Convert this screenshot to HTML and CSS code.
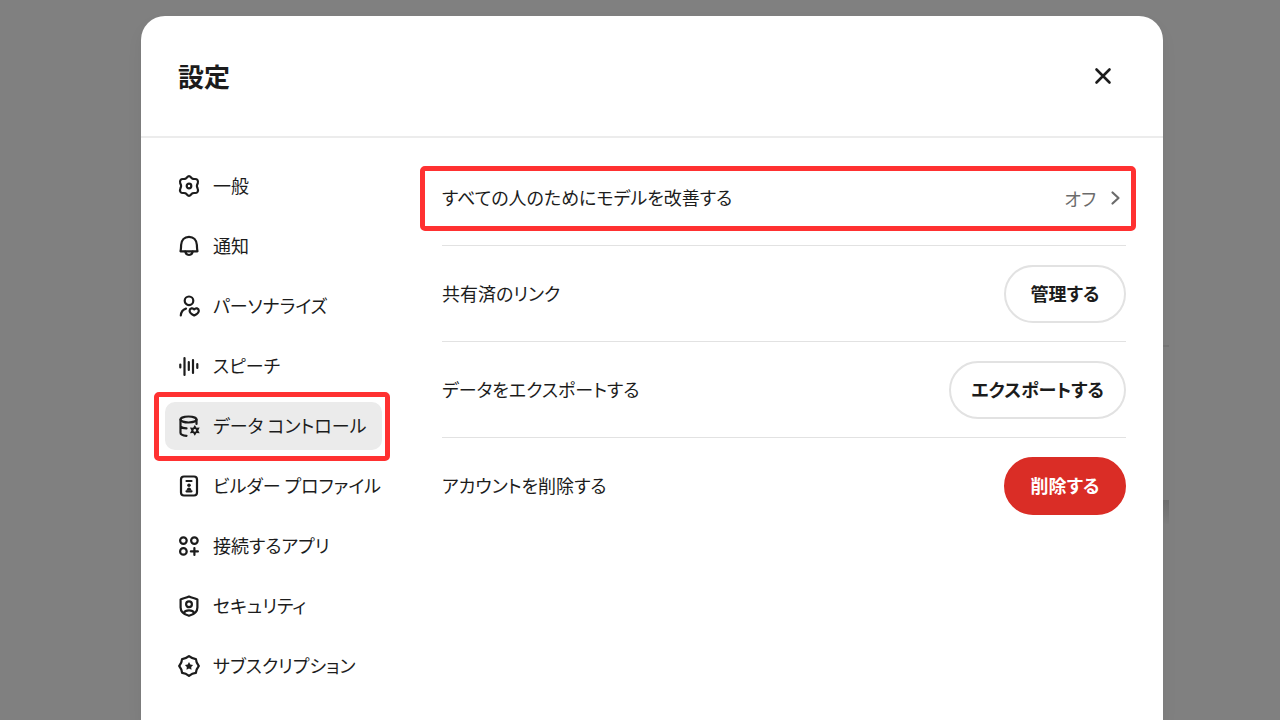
FILE: index.html
```html
<!DOCTYPE html>
<html lang="ja">
<head>
  <meta charset="UTF-8">
  <meta name="viewport" content="width=device-width, initial-scale=1.0">
  <title>設定</title>
  <link rel="stylesheet" href="styles.css">
</head>
<body>
  <main class="modal">
    <header class="modal-header">
      <h1>設定</h1>
      <button class="close" type="button" aria-label="閉じる">
        <svg class="icon" viewBox="0 0 20 20"><path d="M3.500 3.500l13 13M16.500 3.500l-13 13"/></svg>
      </button>
    </header>

    <div class="modal-body">
      <nav class="menu">
        <a class="menu-item" href="#">
          <svg class="icon" viewBox="0 0 22 22"><path d="M11 1.200c1.600 0 2.200 2 3.600 2.600s3.600-.4 4.600.8c1 1.300 1 2.600.6 3.600-.3.900-.9 1.700-.9 2.800s.6 1.900.9 2.800c.4 1 .4 2.300-.6 3.600-1 1.200-3.200.2-4.600.8s-2 2.600-3.600 2.600-2.200-2-3.600-2.600-3.600.4-4.600-.8c-1-1.300-1-2.600-.6-3.600.3-.9.9-1.700.9-2.800s-.6-1.900-.9-2.800c-.4-1-.4-2.300.6-3.600 1-1.200 3.200-.2 4.600-.8S9.400 1.200 11 1.200z"/><circle cx="11" cy="11" r="2.300"/></svg>
          <span>一般</span>
        </a>
        <a class="menu-item" href="#">
          <svg class="icon" viewBox="0 0 22 22"><path d="M2.500 16.300c.6-2.200.5-3.800.6-6.300C3.400 5 6.500 1.800 11 1.800S18.600 5 18.900 10c.1 2.500 0 4.100.6 6.300z"/><path d="M7.300 16.500c.5 2.200 1.800 3.500 3.700 3.500s3.200-1.300 3.700-3.500"/></svg>
          <span>通知</span>
        </a>
        <a class="menu-item" href="#">
          <svg class="icon" viewBox="0 0 22 22"><circle cx="11" cy="5.800" r="4.300"/><path d="M2.800 20.500c.3-3.600 2-5.900 5.200-6.900"/><path d="M16.200 20.500c-2.700-1.300-4.600-2.700-4.600-4.800 0-2.500 3.200-3.200 4.600-1.300 1.400-1.900 4.600-1.200 4.600 1.300 0 2.100-1.900 3.500-4.600 4.800z"/></svg>
          <span>パーソナライズ</span>
        </a>
        <a class="menu-item" href="#">
          <svg class="icon" viewBox="0 0 22 22"><path d="M2.300 9.500v3M6.500 3v17M10.800 7v8M15 5v13M19.300 9v4"/></svg>
          <span>スピーチ</span>
        </a>
        <a class="menu-item active" href="#" aria-current="page">
          <svg class="icon" viewBox="0 0 22 22"><ellipse cx="10.500" cy="4.500" rx="8" ry="3"/><path d="M2.500 4.500v13.300c0 1.700 2.600 2.800 6 3M18.500 4.500v4.500M2.500 11.500c1 1.200 3 1.800 6 1.900"/><path class="fill" d="M16.800 10l1.700 2.700 3.200-.1-1.500 2.800 1.500 2.800-3.200-.1-1.700 2.700-1.700-2.700-3.200.1 1.500-2.800-1.500-2.800 3.200.1z"/><circle class="hole" cx="16.800" cy="15.400" r="1.300"/></svg>
          <span>データ コントロール</span>
        </a>
        <a class="menu-item" href="#">
          <svg class="icon" viewBox="0 0 22 22"><rect x="3" y="1.500" width="16" height="19" rx="3"/><path d="M8.500 6h5M8.500 16.300h5"/><circle class="fill" cx="11" cy="10.300" r="1.800"/><path class="fill" d="M8.500 15.600c.3-2 1.200-3 2.500-3s2.200 1 2.500 3z"/></svg>
          <span>ビルダー プロファイル</span>
        </a>
        <a class="menu-item" href="#">
          <svg class="icon" viewBox="0 0 22 22"><circle cx="5.400" cy="5.600" r="3.300"/><circle cx="16.400" cy="5.600" r="3.300"/><circle cx="5.400" cy="16.400" r="3.300"/><path d="M16.400 13v7M12.900 16.400h7"/></svg>
          <span>接続するアプリ</span>
        </a>
        <a class="menu-item" href="#">
          <svg class="icon" viewBox="0 0 22 22"><path d="M11 1.500c2.800 1.600 5.400 1.400 8.400 2.900v8c0 4.800-3.900 7.100-8.400 8.400-4.500-1.300-8.400-3.600-8.400-8.400v-8c3-1.500 5.600-1.300 8.400-2.900z"/><circle cx="11" cy="9.300" r="2.900"/><path d="M5.700 18c1-2 3-2.700 5.300-2.700s4.300.7 5.300 2.700"/></svg>
          <span>セキュリティ</span>
        </a>
        <a class="menu-item" href="#">
          <svg class="icon" viewBox="0 0 22 22"><path d="M11 1.200q3.200 2.600 6.900 2.900 .3 3.700 2.900 6.900-2.600 3.200-2.900 6.900-3.700.3-6.900 2.900-3.200-2.600-6.900-2.900-.3-3.700-2.900-6.900 2.600-3.200 2.900-6.900 3.700-.3 6.900-2.900z"/><path class="fill" d="M11 7l1.300 2.400 2.800.5-1.900 2 .3 2.800-2.500-1.200-2.500 1.200.3-2.800-1.900-2 2.800-.5z"/></svg>
          <span>サブスクリプション</span>
        </a>
      </nav>

      <section class="settings">
        <div class="row marked">
          <span>すべての人のためにモデルを改善する</span>
          <button class="value" type="button">
            オフ
            <svg class="icon" viewBox="0 0 12 22"><path d="M2.500 5.500L8.500 11l-6 5.500"/></svg>
          </button>
        </div>
        <div class="row">
          <span>共有済のリンク</span>
          <button class="btn" type="button">管理する</button>
        </div>
        <div class="row">
          <span>データをエクスポートする</span>
          <button class="btn" type="button">エクスポートする</button>
        </div>
        <div class="row">
          <span>アカウントを削除する</span>
          <button class="btn danger" type="button">削除する</button>
        </div>
      </section>
    </div>
  </main>
</body>
</html>
```

FILE: styles.css
```css
* {
  box-sizing: border-box;
}
body {
  margin: 0;
  min-height: 100vh;
  display: flex;
  padding: 16px 117px 0 141px;
  background-color: #808080;
  color: #1c1c1c;
  font-family: "Noto Sans CJK JP", sans-serif;
  font-size: 18px;
  line-height: 30px;
  font-feature-settings: "palt";
}
button {
  font: inherit;
  font-feature-settings: inherit;
  color: inherit;
  background: none;
  border: none;
  padding: 0;
  cursor: pointer;
}
.icon {
  width: 22px;
  height: 22px;
  flex: none;
  fill: none;
  stroke: currentColor;
  stroke-width: 2.2;
  stroke-linecap: round;
  stroke-linejoin: round;
}
.icon .fill {
  fill: currentColor;
  stroke: none;
}
.icon .hole {
  fill: #ebebeb;
  stroke: none;
}
.modal {
  position: relative;
  flex: 1;
  background-color: #fff;
  border-radius: 24px 24px 0 0;
  box-shadow: 0 8px 16px rgba(0, 0, 0, 0.06);
}
/* dimmed page edges behind the dialog */
.modal::before,
.modal::after {
  content: "";
  position: absolute;
  left: 100%;
  width: 6px;
}
.modal::before {
  top: 329px;
  height: 2px;
  background-color: #747474;
}
.modal::after {
  top: 484px;
  height: 24px;
  background: linear-gradient(#6c6c6c, #7c7c7c);
}
.modal-header {
  display: flex;
  justify-content: space-between;
  align-items: center;
  height: 122px;
  padding: 0 50px 0 37px;
  border-bottom: 2px solid #ececec;
}
.modal-header h1 {
  margin: 0;
  font-size: 26px;
}
.close {
  display: flex;
}
.close .icon {
  width: 20px;
  height: 20px;
  stroke-width: 2.6;
}
.modal-body {
  display: grid;
  grid-template-columns: 217px 1fr;
  gap: 60px;
  padding: 0 37px 0 24px;
}
.menu {
  display: flex;
  flex-direction: column;
  gap: 12px;
  padding: 24px 0;
}
.menu-item {
  position: relative;
  display: flex;
  align-items: center;
  gap: 13px;
  height: 48px;
  padding-left: 13px;
  border-radius: 10px;
  color: inherit;
  text-decoration: none;
  white-space: nowrap;
}
.menu-item span,
.row span {
  padding-bottom: 2px;
}
.menu-item.active {
  background-color: #ebebeb;
}
/* red frames around the highlighted settings */
.menu-item.active::after,
.marked::after {
  content: "";
  position: absolute;
  border: 5px solid #ff3131;
  border-radius: 5px;
  pointer-events: none;
}
.menu-item.active::after {
  inset: -10px -8px -11px -11px;
}
.marked::after {
  inset: 16px -10px 14px -22px;
}
.settings {
  padding-top: 12px;
}
.row {
  position: relative;
  display: flex;
  justify-content: space-between;
  align-items: center;
  height: 96px;
  border-bottom: 1px solid #e2e2e2;
}
.row:last-child {
  border-bottom: none;
}
.value {
  display: flex;
  align-items: center;
  gap: 14px;
  padding-right: 4px;
  color: #6b6b6b;
}
.value .icon {
  width: 12px;
}
.btn {
  height: 58px;
  min-width: 122px;
  padding: 0 20px 2px;
  border: 2px solid #e2e2e2;
  border-radius: 29px;
  font-weight: bold;
}
.btn.danger {
  background-color: #da2d26;
  border-color: #da2d26;
  color: #fff;
}
```
